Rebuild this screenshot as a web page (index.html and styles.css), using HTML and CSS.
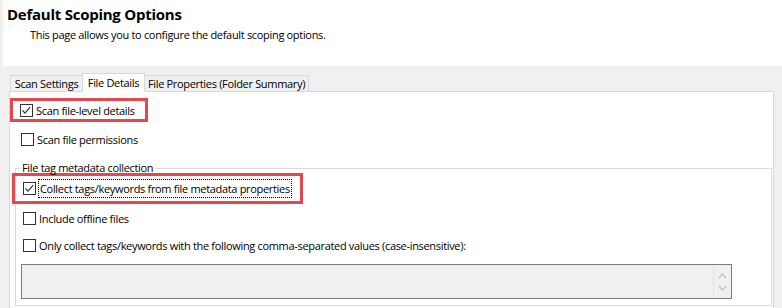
FILE: index.html
```html
<!DOCTYPE html>
<html>
<head>
<meta charset="utf-8">
<link rel="stylesheet" href="styles.css">
</head>
<body>
<div class="header">
  <div class="title">Default Scoping Options</div>
  <div class="subtitle">This page allows you to configure the default scoping options.</div>
</div>
<div class="main">
  <div class="tabstrip">
    <div class="tab tab-scan">Scan Settings</div>
    <div class="tab tab-details active">File Details</div>
    <div class="tab tab-props">File Properties (Folder Summary)</div>
  </div>
  <div class="panel">
    <div class="highlight hl-first">
      <span class="cb checked"><svg viewBox="0 0 13 13" width="13" height="13"><polyline points="2.5,6.5 5,9.2 10.2,3.2" fill="none" stroke="#333" stroke-width="1.2"/></svg></span>
      <span class="lbl">Scan file-level details</span>
    </div>
    <div class="row row-perm">
      <span class="cb"></span>
      <span class="lbl">Scan file permissions</span>
    </div>
    <fieldset class="group">
      <legend class="legend">File tag metadata collection</legend>
      <div class="highlight hl-second">
        <span class="cb checked"><svg viewBox="0 0 13 13" width="13" height="13"><polyline points="2.5,6.5 5,9.2 10.2,3.2" fill="none" stroke="#333" stroke-width="1.2"/></svg></span>
        <span class="lbl focus">Collect tags/keywords from file metadata properties</span>
      </div>
      <div class="row row-offline">
        <span class="cb"></span>
        <span class="lbl">Include offline files</span>
      </div>
      <div class="row row-only">
        <span class="cb"></span>
        <span class="lbl">Only collect tags/keywords with the following comma-separated values (case-insensitive):</span>
      </div>
      <div class="textbox">
        <div class="tb-scroll">
          <svg viewBox="0 0 9 8" width="9" height="8"><polyline points="1,6 4.5,2 8,6" fill="none" stroke="#c4c4c4" stroke-width="1.3"/></svg>
          <svg viewBox="0 0 9 8" width="9" height="8"><polyline points="1,2 4.5,6 8,2" fill="none" stroke="#c4c4c4" stroke-width="1.3"/></svg>
        </div>
      </div>
    </fieldset>
  </div>
</div>
</body>
</html>
```

FILE: styles.css
```css
html, body {
  margin: 0;
  padding: 0;
}
body {
  background: #f0f0f0;
  font-family: "Open Sans", "Noto Sans", sans-serif;
  font-size: 11px;
  letter-spacing: -0.32px;
  color: #000;
  width: 782px;
  height: 308px;
  overflow: hidden;
}
.header {
  background: #fff;
  margin-left: 3px;
  height: 66px;
  box-sizing: border-box;
  padding-top: 5px;
}
.title {
  font-weight: 700;
  font-size: 15px;
  letter-spacing: -0.25px;
  line-height: 18px;
  padding-left: 4px;
}
.subtitle {
  margin-top: 5px;
  line-height: 14px;
  padding-left: 27px;
}
.main {
  padding-top: 7px;
}
.tabstrip {
  display: flex;
  align-items: flex-end;
  margin-left: 10px;
  height: 18px;
}
.tab {
  box-sizing: border-box;
  height: 16px;
  border: 1px solid #d9d9d9;
  border-bottom: none;
  background: #f0f0f0;
  text-align: center;
  line-height: 15px;
  white-space: nowrap;
}
.tab-scan { width: 72px; border-right: none; }
.tab-details { width: 63px; }
.tab-props { width: 164px; border-left: none; }
.tab.active {
  background: #fff;
  height: 19px;
  margin-bottom: -1px;
  position: relative;
  z-index: 1;
  line-height: 18px;
}
.panel {
  margin-left: 9px;
  width: 765px;
  height: 230px;
  box-sizing: border-box;
  border: 1px solid #d9d9d9;
  background: #fff;
}
.cb {
  flex: none;
  box-sizing: border-box;
  width: 13px;
  height: 13px;
  border: 1px solid #333;
  background: #fff;
  display: inline-flex;
  align-items: center;
  justify-content: center;
}
.cb svg {
  display: block;
  margin: -1px;
}
.lbl {
  white-space: nowrap;
  line-height: 13px;
  margin-left: 3px;
}
.row {
  display: flex;
  align-items: center;
  height: 13px;
}
.highlight {
  display: flex;
  align-items: center;
  box-sizing: border-box;
  border: 3px solid #e5474c;
}
.hl-first {
  margin-top: 6px;
  width: 138px;
  height: 24px;
  padding-left: 7px;
}
.row-perm {
  margin-top: 11px;
  padding-left: 11px;
}
.group {
  margin: 15px 0 0 5px;
  padding: 0 0 6px 0;
  width: 757px;
  box-sizing: border-box;
  border: 1px solid #dcdcdc;
  min-width: 0;
}
.legend {
  padding: 0 2px;
  margin-left: 4px;
  line-height: 14px;
}
.hl-second {
  margin-top: -2px;
  margin-left: -4px;
  width: 291px;
  height: 31px;
  padding-left: 8px;
}
.focus {
  border: 1px dotted #000;
  padding: 2px 1px;
  margin-left: 2px;
}
.row-offline {
  margin-top: 8px;
  padding-left: 7px;
}
.row-only {
  margin-top: 14px;
  padding-left: 7px;
}
.textbox {
  margin: 12px 0 0 5px;
  width: 711px;
  height: 35px;
  box-sizing: border-box;
  border: 1px solid #7a7a7a;
  background: #f0f0f0;
  display: flex;
  justify-content: flex-end;
}
.tb-scroll {
  width: 17px;
  margin: 2px 0;
  border-left: 1px solid #e2e2e2;
  display: flex;
  flex-direction: column;
  align-items: center;
  justify-content: center;
  gap: 4px;
}
.tb-scroll svg {
  display: block;
}
```
